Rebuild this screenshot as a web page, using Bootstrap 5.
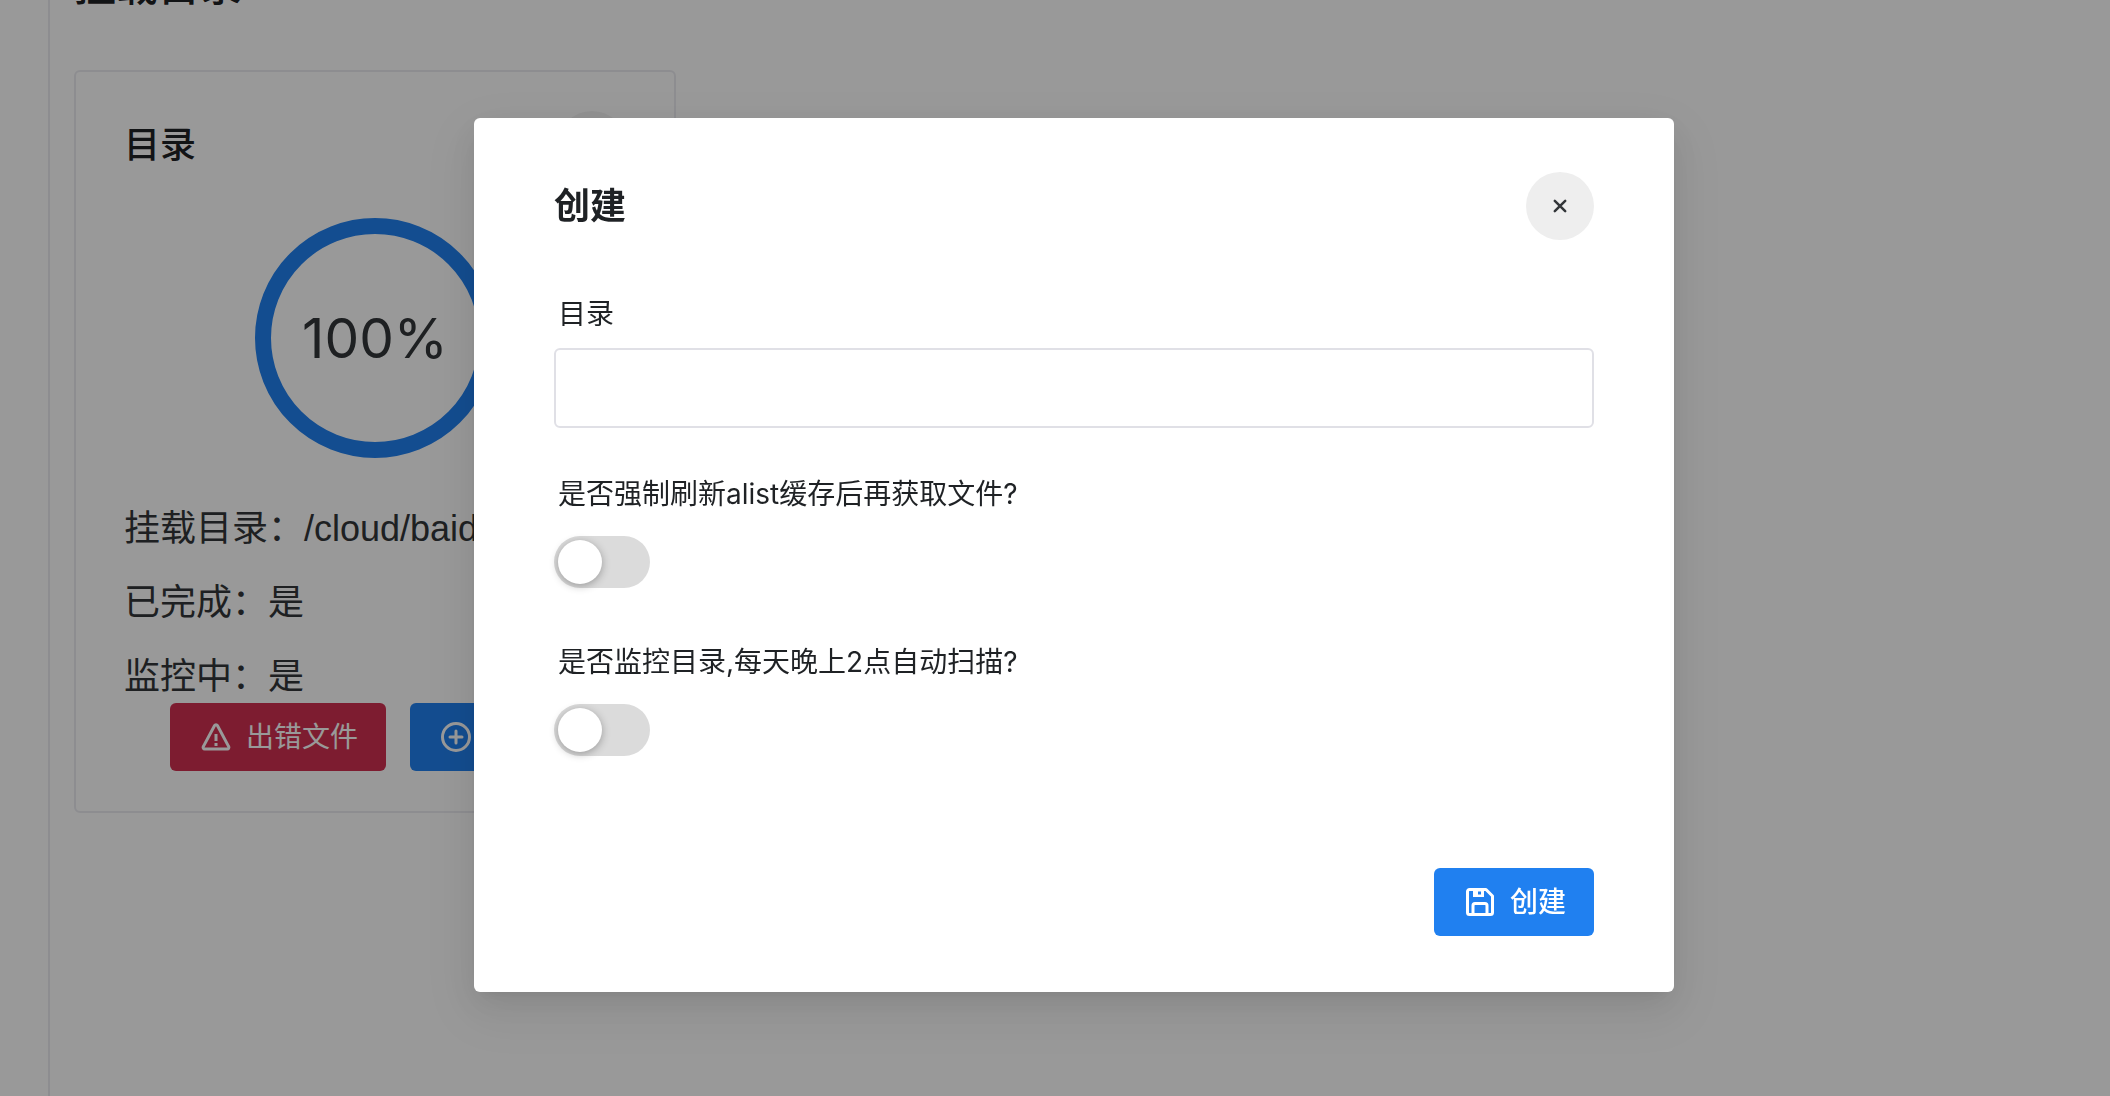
<!DOCTYPE html>
<html lang="zh-CN" class="h-100">
<head>
<meta charset="utf-8">
<meta name="viewport" content="width=device-width, initial-scale=1">
<title>挂载目录</title>
<link href="https://cdn.jsdelivr.net/npm/bootstrap@5.3.0/dist/css/bootstrap.min.css" rel="stylesheet">
<style>
:root{--brand:#2080f0;--danger:#d03050;--line:#e0e0e6;--line-soft:#ececf1;--ink:#1f2225;--ink-body:#333639}
body{font-family:Inter,"Noto Sans CJK SC",sans-serif;color:var(--ink-body);background:#fff;overflow:hidden}
.side-rail{width:50px;border-right:2px solid var(--line-soft)}
.page-title{font-size:42px;line-height:56px;margin:-42px 0 56px;color:var(--ink);font-weight:500}
.mount-card{width:602px;padding:39px 48px 40px;border:2px solid var(--line-soft);border-radius:6px}
.panel-title{font-size:36px;line-height:68px;font-weight:500;color:var(--ink)}
.create-panel .panel-title{font-weight:700}
.round-btn{width:68px;height:68px;border-radius:50%;background:#eee;border:0;color:#333639}
.mount-card .round-btn{background:#f3f3f3}
.ring-wrap{display:grid;place-items:center;margin:39px 0 34px}
.ring-wrap>*{grid-area:1/1}
.ring-label{font-size:55px;line-height:64px}
.info-line{font-size:36px;line-height:74px;white-space:nowrap;overflow:hidden;font-family:"Liberation Sans","Noto Sans CJK SC",sans-serif}
.info-list{margin-bottom:-11px}
.act-btn{--bs-btn-color:#fff;--bs-btn-hover-color:#fff;height:68px;font-size:28px;line-height:36px;padding:0 28px 0 30px;border:0;border-radius:6px;gap:14px;display:inline-flex;align-items:center}
.act-primary{--bs-btn-bg:var(--brand);--bs-btn-hover-bg:#4098fc;font-weight:500}
.act-danger{--bs-btn-bg:var(--danger);--bs-btn-hover-bg:#de576d}
.act-add{width:170px}
.mask{--bs-backdrop-bg:#000;--bs-backdrop-opacity:.4}
.modal{padding-left:38px}
.create-dialog{max-width:1200px;margin:118px auto}
.create-panel{border:0;border-radius:6px;padding:54px 80px 56px;box-shadow:0 6px 12px -8px rgba(0,0,0,.12),0 12px 32px rgba(0,0,0,.08),0 18px 56px 16px rgba(0,0,0,.05)}
.field-label{font-size:28px;line-height:36px;color:var(--ink);padding-left:4px;display:block}
.text-field{height:80px;font-size:28px;border:2px solid var(--line);border-radius:6px}
.form-switch.rail{padding:0;margin:0;min-height:52px}
.rail .form-check-input{appearance:none;margin:0;float:none;display:block;width:96px;height:52px;border:0;border-radius:26px;background:#dbdbdb;padding:4px}
.rail .form-check-input::before{content:"";display:block;width:44px;height:44px;border-radius:50%;background:#fff;box-shadow:0 2px 8px rgba(0,0,0,.3)}
.rail .form-check-input:checked{background:var(--brand)}
.rail .form-check-input:checked::before{margin-left:44px}
</style>
<script src="https://cdn.jsdelivr.net/npm/bootstrap@5.3.0/dist/js/bootstrap.bundle.min.js"></script>
</head>
<body class="h-100">
<div class="d-flex h-100">
  <aside class="side-rail flex-shrink-0"></aside>
  <main class="flex-grow-1 ps-4 pt-0">
    <h1 class="page-title">挂载目录</h1>
    <section class="mount-card">
      <header class="d-flex justify-content-between align-items-center">
        <h2 class="panel-title m-0">目录</h2>
        <button type="button" class="round-btn" aria-label="删除"></button>
      </header>
      <div class="ring-wrap">
        <svg width="240" height="240" viewBox="0 0 240 240" aria-hidden="true"><circle cx="120" cy="120" r="112" fill="none" stroke="#2080f0" stroke-width="16"/></svg>
        <span class="ring-label">100%</span>
      </div>
      <div class="info-list">
        <div class="info-line">挂载目录：/cloud/baidu</div>
        <div class="info-line">已完成：是</div>
        <div class="info-line">监控中：是</div>
      </div>
      <div class="d-flex justify-content-center gap-4">
        <button type="button" class="btn act-btn act-danger">
          <svg width="32" height="32" viewBox="0 0 32 32" fill="none" stroke="currentColor" stroke-width="3" stroke-linejoin="round" aria-hidden="true"><path d="M14.600 4.500 3.300 25.600A1.600 1.600 0 0 0 4.700 28h22.600a1.600 1.600 0 0 0 1.400-2.400L17.400 4.500a1.600 1.600 0 0 0-2.800 0z"/><path d="M16 13v7M16 22v3"/></svg>
          出错文件
        </button>
        <button type="button" class="btn act-btn act-primary act-add" aria-label="添加">
          <svg width="32" height="32" viewBox="0 0 32 32" fill="none" stroke="currentColor" stroke-width="3" stroke-linecap="round" aria-hidden="true"><circle cx="16" cy="16" r="13.500"/><path d="M16 10v12M10 16h12"/></svg>
        </button>
      </div>
    </section>
  </main>
</div>

<div class="modal-backdrop mask show"></div>
<div class="modal d-block" role="dialog" aria-modal="true" aria-labelledby="createTitle">
  <div class="modal-dialog create-dialog">
    <form class="modal-content create-panel">
      <header class="d-flex justify-content-between align-items-center">
        <h2 class="panel-title m-0" id="createTitle">创建</h2>
        <button type="button" class="round-btn d-flex align-items-center justify-content-center" aria-label="关闭">
          <svg width="16" height="16" viewBox="0 0 16 16" fill="none" stroke="currentColor" stroke-width="2.500" stroke-linecap="round" aria-hidden="true"><path d="M2.800 2.800l10.400 10.400M13.200 2.800l-10.400 10.400"/></svg>
        </button>
      </header>
      <div class="d-flex flex-column">
        <div class="pt-5 mt-2">
          <label class="field-label mb-3" for="dir">目录</label>
          <input class="form-control text-field" id="dir" type="text">
        </div>
        <div class="pt-5">
          <label class="field-label mb-4" for="refresh">是否强制刷新alist缓存后再获取文件?</label>
          <div class="form-check form-switch rail"><input class="form-check-input" type="checkbox" role="switch" id="refresh"></div>
        </div>
        <div class="pt-5 mt-2">
          <label class="field-label mb-4" for="watch">是否监控目录,每天晚上2点自动扫描?</label>
          <div class="form-check form-switch rail"><input class="form-check-input" type="checkbox" role="switch" id="watch"></div>
        </div>
      </div>
      <footer class="d-flex justify-content-end mt-5 pt-5">
        <button type="submit" class="btn act-btn act-primary mt-3">
          <svg width="32" height="32" viewBox="0 0 32 32" fill="none" stroke="currentColor" stroke-width="3" stroke-linejoin="round" aria-hidden="true"><path d="M5.500 3.500h16.500l6.500 6.500v16.500a2 2 0 0 1-2 2h-21a2 2 0 0 1-2-2v-21a2 2 0 0 1 2-2z"/><path d="M9 28.500V19.500a2 2 0 0 1 2-2h10a2 2 0 0 1 2 2v9"/><path d="M9 3h11v8H9zM14 5.500v3h3v-3z" fill="currentColor" fill-rule="evenodd" stroke="none"/></svg>
          创建
        </button>
      </footer>
    </form>
  </div>
</div>
</body>
</html>
